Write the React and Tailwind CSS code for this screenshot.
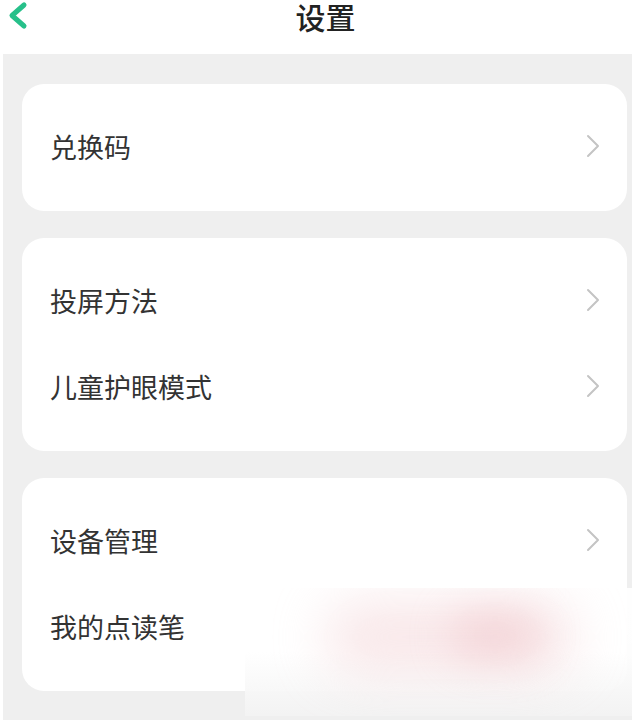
import React from 'react';

const groups = [
    [{ label: '兑换码', arrow: true }],
    [
        { label: '投屏方法', arrow: true },
        { label: '儿童护眼模式', arrow: true },
    ],
    [
        { label: '设备管理', arrow: true },
        { label: '我的点读笔', arrow: false },
    ],
];

const Chevron = () => (
    <svg width="14" height="24" viewBox="0 0 14 24" fill="none" className="mr-[27px]">
        <path d="M2 2 L12 12 L2 22" stroke="#c4c4c4" strokeWidth="2" strokeLinecap="round" strokeLinejoin="round" />
    </svg>
);

const Row = ({ item }) => (
    <div className="h-[86px] flex items-center justify-between pl-[28px]">
        <span className="text-[27px] leading-none text-[#333333]">{item.label}</span>
        {item.arrow && <Chevron />}
    </div>
);

export default function App() {
    return (
        <div
            className="relative w-[635px] h-[720px] bg-white overflow-hidden flex flex-col"
            style={{ fontFamily: '"Noto Sans CJK SC", "Noto Sans", sans-serif' }}
        >
            {/* Header */}
            <div className="h-[54px] shrink-0 relative flex justify-center pl-[16px]">
                <svg width="26" height="30" viewBox="0 0 26 30" fill="none" className="absolute left-[4px] top-[1px]">
                    <path d="M20 4 L8 14.5 L20 25" stroke="#27c08a" strokeWidth="5" strokeLinecap="round" strokeLinejoin="round" />
                </svg>
                <span className="mt-[1px] text-[30px] leading-[30px] text-[#222222] font-medium">设置</span>
            </div>

            {/* Content */}
            <div className="flex-1 mx-[3px] bg-[#efefef] pl-[19px] pr-[5px] pt-[30px] flex flex-col gap-[27px]">
                {groups.map((rows, gi) => (
                    <div key={gi} className="bg-white rounded-[22px] pt-[19px] pb-[22px] flex flex-col">
                        {rows.map((item) => (
                            <Row key={item.label} item={item} />
                        ))}
                    </div>
                ))}
            </div>

            {/* Watermark blur patch */}
            <div className="absolute left-[245px] top-[588px] w-[387px] h-[128px] bg-gradient-to-b from-white/95 via-white/90 to-[#f3f3f3]/95 overflow-hidden">
                <div className="absolute left-[80px] top-[14px] w-[250px] h-[70px] rounded-full bg-[#f2cfd2] opacity-50 blur-[26px]" />
                <div className="absolute left-[205px] top-[22px] w-[90px] h-[50px] rounded-full bg-[#efc3c8] opacity-50 blur-[20px]" />
            </div>
        </div>
    );
}
